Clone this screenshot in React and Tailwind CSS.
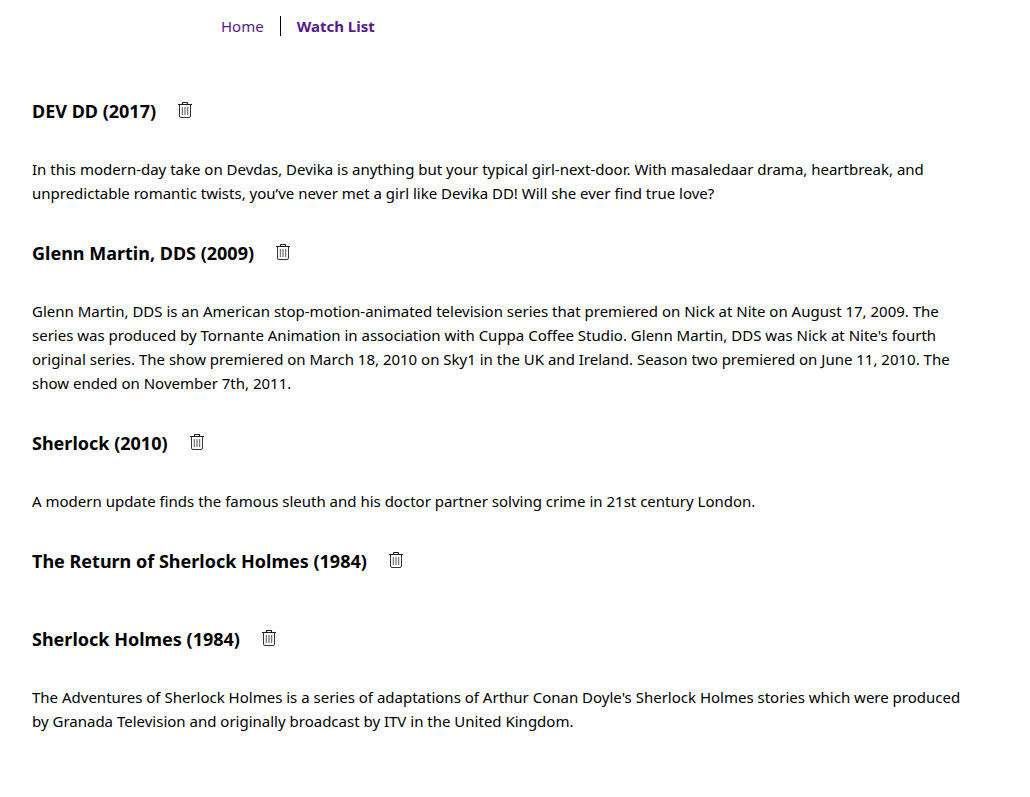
import React, { useState } from "react";

const SHOWS = [
  {
    id: 1,
    title: "DEV DD (2017)",
    summary:
      "In this modern-day take on Devdas, Devika is anything but your typical girl-next-door. With masaledaar drama, heartbreak, and unpredictable romantic twists, you’ve never met a girl like Devika DD! Will she ever find true love?",
  },
  {
    id: 2,
    title: "Glenn Martin, DDS (2009)",
    summary:
      "Glenn Martin, DDS is an American stop-motion-animated television series that premiered on Nick at Nite on August 17, 2009. The series was produced by Tornante Animation in association with Cuppa Coffee Studio. Glenn Martin, DDS was Nick at Nite's fourth original series. The show premiered on March 18, 2010 on Sky1 in the UK and Ireland. Season two premiered on June 11, 2010. The show ended on November 7th, 2011.",
  },
  {
    id: 3,
    title: "Sherlock (2010)",
    summary:
      "A modern update finds the famous sleuth and his doctor partner solving crime in 21st century London.",
  },
  { id: 4, title: "The Return of Sherlock Holmes (1984)", summary: "" },
  {
    id: 5,
    title: "Sherlock Holmes (1984)",
    summary:
      "The Adventures of Sherlock Holmes is a series of adaptations of Arthur Conan Doyle's Sherlock Holmes stories which were produced by Granada Television and originally broadcast by ITV in the United Kingdom.",
  },
];

function TrashIcon() {
  return (
    <svg viewBox="0 0 14 16" className="h-4 w-3.5" fill="none" aria-hidden="true">
      <path d="M0 2.5h14M4.5 2.5V1.3a.8.8 0 0 1 .8-.8h3.4a.8.8 0 0 1 .8.8v1.2" stroke="#1a1a1a" strokeWidth="1.2" />
      <path d="M1.5 2.5v11.5a1.5 1.5 0 0 0 1.5 1.5h8a1.5 1.5 0 0 0 1.5-1.5V2.5" stroke="#333" />
      <path d="M4.4 5v8M7 5v8M9.6 5v8" stroke="#777" strokeWidth="1.3" />
    </svg>
  );
}

function Show({ show, onRemove }) {
  return (
    <article className="mb-[18px]">
      <div className="flex h-15 items-center gap-[22px]">
        <h2 className="text-lg leading-6 font-bold">{show.title}</h2>
        <button type="button" aria-label={"Remove " + show.title} onClick={onRemove} className="cursor-pointer pb-0.5">
          <TrashIcon />
        </button>
      </div>
      {show.summary && <p className="mt-4 text-[15px] leading-6">{show.summary}</p>}
    </article>
  );
}

export default function App() {
  const [shows, setShows] = useState(SHOWS);
  return (
    <div className="bg-white px-8 pt-4 font-['Noto_Sans',sans-serif] text-black">
      <nav className="ml-[189px] flex h-5 items-center gap-4 text-[15px] leading-5 text-[#551a8b]">
        <a href="#home">Home</a>
        <span className="h-5 w-px bg-black" />
        <a href="#watch-list" className="font-bold">Watch List</a>
      </nav>
      <main className="mt-[45px] mr-6">
        {shows.map((show) => (
          <Show key={show.id} show={show} onRemove={() => setShows(shows.filter((s) => s.id !== show.id))} />
        ))}
      </main>
    </div>
  );
}
